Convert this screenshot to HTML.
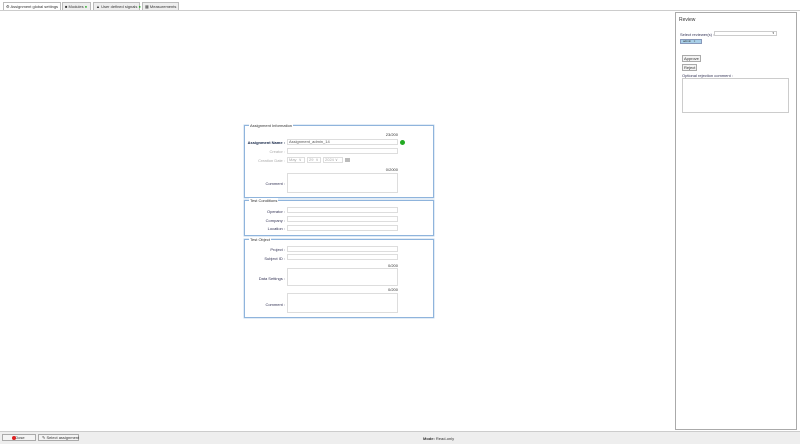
<!DOCTYPE html><html><head><style>
*{box-sizing:border-box;margin:0;padding:0}
body{width:800px;height:444px;background:#fff;font-family:"Liberation Sans",sans-serif;font-size:4px;color:#333;position:relative;overflow:hidden}
.a{position:absolute;white-space:nowrap}
.tab{position:absolute;top:2px;height:8px;border:1px solid #bbb;border-bottom:none;background:#eee;font-size:4px;line-height:7px;padding-left:2px;white-space:nowrap}
.fs{position:absolute;left:244px;width:190px;border:1px solid #8fb4dc;box-shadow:0 0 0 0.5px #c5d9ee}
.lg{position:absolute;left:4px;top:-3px;background:#fff;padding:0 1px;font-size:4px}
.in{position:absolute;left:287px;width:111px;border:1px solid #ddd;background:#fff;white-space:nowrap}
.lb{position:absolute;right:515px;font-size:4px;color:#335;text-align:right;white-space:nowrap}
.ct{position:absolute;right:402px;font-size:4px}
.btn{position:absolute;border:1px solid #aaa;background:#f4f4f4;font-size:4px;line-height:5px;padding:0 1px;white-space:nowrap}
</style></head><body>
<div class="a" style="left:0;top:10px;width:800px;height:1px;background:#ccc"></div>
<div class="tab" style="left:3px;width:58px;background:#fff">⚙ Assignment global settings</div>
<div class="tab" style="left:62px;width:29px">■ Modules <span style="color:#2a2">●</span></div>
<div class="tab" style="left:93px;width:47px">▲ User defined signals <span style="color:#2a2">●</span></div>
<div class="tab" style="left:142px;width:37px">▦ Measurements</div>

<div class="fs" style="top:125px;height:73px"><div class="lg">Assignment Information</div></div>
<div class="ct" style="top:132px">23/200</div>
<div class="lb" style="top:140px;color:#124;font-weight:bold">Assignment Name :</div>
<div class="in" style="top:139px;height:6px;font-size:4px;line-height:4px;padding-left:1px;color:#555">Assignment_admin_14</div>
<div class="a" style="left:400px;top:140px;width:5px;height:5px;border-radius:50%;background:#2a2"></div>
<div class="lb" style="top:149px;color:#aaa">Creator :</div>
<div class="in" style="top:148px;height:6px"></div>
<div class="lb" style="top:158px;color:#aaa">Creation Date :</div>
<div class="in" style="top:157px;height:6px;width:18px;color:#aaa;line-height:4px;padding-left:1px">May &nbsp;∨</div>
<div class="in" style="top:157px;height:6px;left:307px;width:14px;color:#aaa;line-height:4px;padding-left:1px">29 &nbsp;∨</div>
<div class="in" style="top:157px;height:6px;left:323px;width:20px;color:#aaa;line-height:4px;padding-left:1px">2024 ∨</div>
<div class="a" style="left:345px;top:158px;width:5px;height:4px;background:#bbb"></div>
<div class="ct" style="top:167px">0/2000</div>
<div class="lb" style="top:181px">Comment :</div>
<div class="in" style="top:173px;height:20px"></div>

<div class="fs" style="top:200px;height:36px"><div class="lg">Test Conditions</div></div>
<div class="lb" style="top:209px">Operator :</div><div class="in" style="top:207px;height:6px"></div>
<div class="lb" style="top:218px">Company :</div><div class="in" style="top:216px;height:6px"></div>
<div class="lb" style="top:226px">Location :</div><div class="in" style="top:225px;height:6px"></div>

<div class="fs" style="top:239px;height:79px"><div class="lg">Test Object</div></div>
<div class="lb" style="top:247px">Project :</div><div class="in" style="top:246px;height:6px"></div>
<div class="lb" style="top:256px">Subject ID :</div><div class="in" style="top:254px;height:6px"></div>
<div class="ct" style="top:263px">0/200</div>
<div class="lb" style="top:276px">Data Settings :</div><div class="in" style="top:268px;height:18px"></div>
<div class="ct" style="top:287px">0/200</div>
<div class="lb" style="top:302px">Comment :</div><div class="in" style="top:293px;height:20px"></div>

<div class="a" style="left:675px;top:12px;width:122px;height:418px;border:1px solid #aaa"></div>
<div class="a" style="left:679px;top:17px;font-size:5px">Review</div>
<div class="a" style="left:680px;top:32px;color:#335">Select reviewer(s) :</div>
<div class="a" style="left:714px;top:31px;width:63px;height:5px;border:1px solid #ccc"><span style="position:absolute;right:2px;top:-1px;font-size:3px">▾</span></div>
<div class="a" style="left:680px;top:39px;width:22px;height:5px;background:#a8cfe8;border:1px solid #89b;font-size:3px;line-height:3px;padding-left:2px">admin &nbsp; ×</div>
<div class="btn" style="left:682px;top:55px">Approve</div>
<div class="btn" style="left:682px;top:64px">Reject</div>
<div class="a" style="left:682px;top:73px;color:#335">Optional rejection comment :</div>
<div class="a" style="left:682px;top:78px;width:107px;height:35px;border:1px solid #ccc"></div>

<div class="a" style="left:0;top:431px;width:800px;height:13px;background:#eee;border-top:1px solid #ccc"></div>
<div class="btn" style="left:2px;top:434px;width:34px;height:7px;line-height:6px;padding-left:8px"><span style="position:absolute;left:9px;top:1px;width:4px;height:4px;border-radius:50%;background:#d22"></span>&nbsp;&nbsp;&nbsp;Close</div>
<div class="btn" style="left:38px;top:434px;width:41px;height:7px;line-height:6px;padding-left:3px">✎ Select assignment</div>
<div class="a" style="left:423px;top:436px"><b>Mode:</b> Read-only</div>
</body></html>
